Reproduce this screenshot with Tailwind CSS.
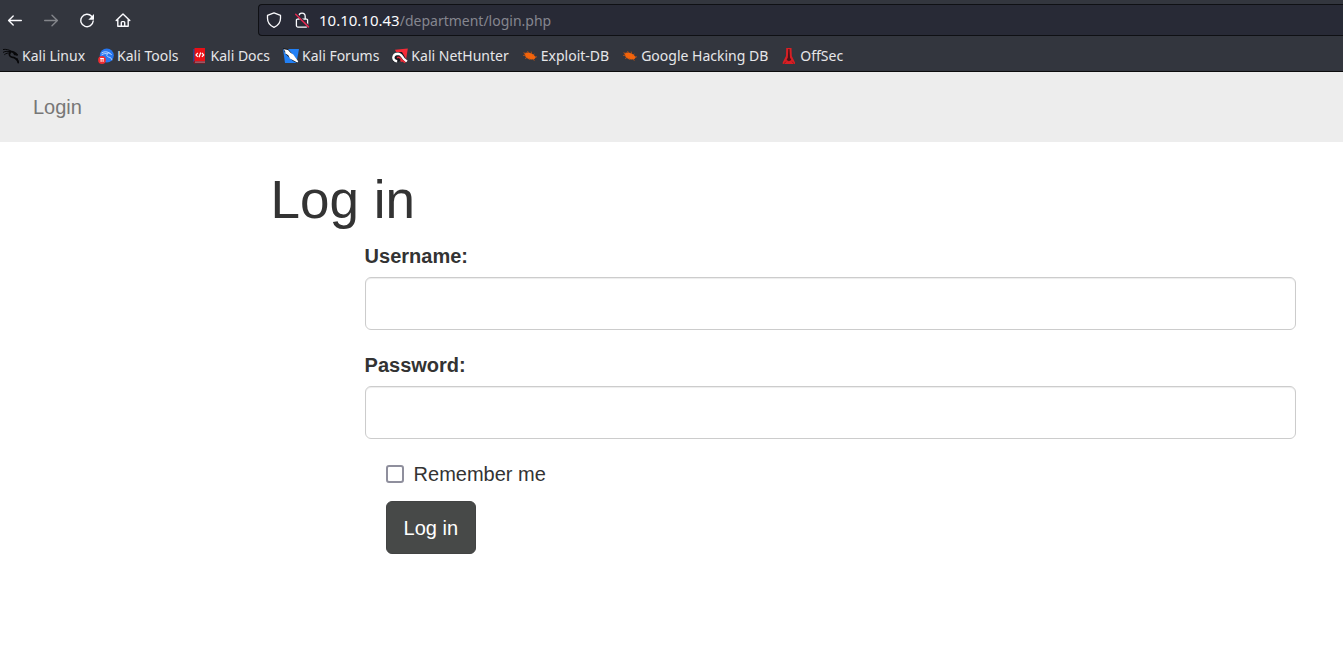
<!DOCTYPE html>
<html lang="en">
<head>
<meta charset="utf-8">
<meta name="viewport" content="width=device-width, initial-scale=1">
<title>Log in</title>
<script src="https://cdn.jsdelivr.net/npm/@tailwindcss/browser@4"></script>
</head>
<body class="min-h-screen bg-white font-['Liberation_Sans',Arial,sans-serif] text-xl/7 text-[#333333]">

<header class="border-b border-[#0c0c0d] bg-[#33363e] pt-1 font-['Noto_Sans',sans-serif] text-[#fbfbfe]">
  <div class="flex items-center">
    <div class="flex w-[258px] shrink-0 gap-5 pl-[7px]">
      <button type="button" aria-label="Back" class="size-4">
        <svg class="size-4" viewBox="0 0 16 16" fill="none" stroke="currentColor" stroke-width="1.4" stroke-linecap="round" stroke-linejoin="round"><path d="M14.3 8.5H1.7M6.200 4 1.600 8.500 6.200 13"/></svg>
      </button>
      <button type="button" aria-label="Forward" disabled class="size-4 text-[#84868b]">
        <svg class="size-4" viewBox="0 0 16 16" fill="none" stroke="currentColor" stroke-width="1.4" stroke-linecap="round" stroke-linejoin="round"><path d="M1.7 8.5h12.6M9 3.2l5.4 5.3L9 13.8"/></svg>
      </button>
      <button type="button" aria-label="Reload" class="size-4">
        <svg class="size-4" viewBox="0 0 16 16" fill="none"><path d="M12.6 4.3A6.2 6.2 0 1 0 14.2 9" stroke="currentColor" stroke-width="1.4" stroke-linecap="round"/><path d="M15 2v5.2a.6.6 0 0 1-.6.6H9.3z" fill="currentColor"/></svg>
      </button>
      <button type="button" aria-label="Home" class="size-4">
        <svg class="size-4" viewBox="0 0 16 16" fill="none" stroke="currentColor" stroke-width="1.4" stroke-linecap="round" stroke-linejoin="round"><path d="M1.2 8.6 8 1.9l6.8 6.7M2.8 7.4v6.900h10.400V7.400M6.300 14v-3.600a.8.8 0 0 1 .8-.8h1.800a.8.8 0 0 1 .8.8V14"/></svg>
      </button>
    </div>
    <div class="flex h-8 grow items-center rounded-l-[4px] border border-r-0 border-[#0f1014] bg-[#282a36] pl-[7px]">
      <svg class="size-4" viewBox="0 0 16 16" fill="none" stroke="currentColor" stroke-width="1.3" stroke-linejoin="round"><path d="M8 .9 14.500 3.400v2.900c0 4.200-2.400 7.300-6.500 9-4.100-1.700-6.500-4.800-6.500-9V3.400z"/></svg>
      <svg class="ml-3 size-4" viewBox="0 0 16 16" fill="none"><path d="M4.800 7V4.400a3.200 3.200 0 0 1 6.400 0V7M3.300 7.200h9.400a.9.900 0 0 1 .9.900v5.500a1.500 1.500 0 0 1-1.500 1.500H3.900a1.500 1.500 0 0 1-1.500-1.500V8.100a.9.900 0 0 1 .9-.9z" stroke="currentColor" stroke-width="1.3"/><path d="M1.200 1.200 15 15" stroke="#282a36" stroke-width="2.600"/><path d="M1.700 2.200 14.500 14.900" stroke="#e22850" stroke-width="1.500" stroke-linecap="round"/></svg>
      <div class="ml-[9px] text-[15px]/6">10.10.10.43<span class="text-sm/6 text-[#85868f]">/department/login.php</span></div>
    </div>
  </div>

  <nav aria-label="Bookmarks" class="flex h-[35px] items-center gap-[13px] pt-px pb-px pl-[3px] text-sm/5 whitespace-nowrap text-[#e6e6e9]">
    <a href="#" class="flex items-center gap-[3px] pt-1">
      <svg class="size-4" viewBox="0 0 16 16" fill="none" stroke="#08080a" stroke-linecap="round"><path d="M0 1.500c3-.6 6.500.2 9 2.200M.2 4.300c2.500-1.400 5-1.300 7.500-.3M1.600 6.500c1.500-1.300 3.400-1.700 5.400-1.600" stroke-width="1"/><path d="M7 3.600c3.600-.6 5.200.7 6.900 3.100M7.400 4.300C5.700 6 6.200 8.500 9 9.100c3.500.6 5.500 1.600 6.200 5.600" stroke-width="1.700"/><path d="M10.300 4.900l4.500 2-3.200-.1zM14 10.500l1.200 3" stroke-width="1.100"/></svg>
      Kali Linux</a>
    <a href="#" class="flex items-center gap-[3px] pt-1">
      <svg class="size-4" viewBox="0 0 16 16" fill="none"><circle cx="8.800" cy="7.500" r="7" fill="#2677f2"/><path d="M3.500 5c3-1.900 6-1.300 8.200.1M3.500 7c2-1.600 4.200-1.700 6-1M9 5.300c2.500-.8 3.900.4 4.600 1.700M9.400 6.100c-1.500 1.700.2 2.800 1.700 3.100 1.800.4 2.500 1.400 2.900 3" stroke="#b9d5ff" stroke-width="1"/><circle cx="4" cy="12" r="3.900" fill="#ef2d32"/><path d="M2.200 10.500h3.600M3.100 10.500v3.400M5.100 10.500v3.400" stroke="#fff" stroke-width="1"/></svg>
      Kali Tools</a>
    <a href="#" class="flex items-center gap-[3px] pt-1">
      <svg class="size-4" viewBox="0 0 16 16" fill="none"><path d="M1 1h2v13H1z" fill="#28418b"/><path d="M2.500 0H13v13H2.500z" fill="#e91016"/><path d="M1.600 13H13v2.500H1.600z" fill="#8f1522"/><path d="M3 13.600h10v1H3z" fill="#a9858f"/><path d="M5.800 5 4 6.900l1.800 1.900M9.900 5l1.800 1.900-1.800 1.900M8.700 4.500 7 9.300" stroke="#fff" stroke-width="1.200"/></svg>
      Kali Docs</a>
    <a href="#" class="flex items-center gap-[3px] pt-1">
      <svg class="size-4" viewBox="0 0 16 16" fill="none"><path d="M0 1h16l-2.500 14H2z" fill="#2280f5"/><path d="M0 0l5 1 10.500 12.500L14 15l-4-2-7.500-7z" fill="#16181e"/><path d="M.8 1.300l4.200.7 2.500 2.800 2.800 1.800L15.300 13.400l-1 1.200-4.600-2.700-2.800-1.400-1.600-3.300-3.700-2.200 1-.7z" fill="#fff"/></svg>
      Kali Forums</a>
    <a href="#" class="flex items-center gap-[3px] pt-1">
      <svg class="size-4" viewBox="0 0 16 16" fill="none"><path d="M3 1.800 15.800.5 14 12 9 14z" fill="#f52b37"/><path d="M0 7.500 4 4l6 0 5.500 9.500-1.500 1.500-5-3.200-3 2.400-5-.5z" fill="#17191f"/><path d="M5.200 13.200c-5.500-.4-5-7.300.8-7.500 3.300 0 3.700 2.900 5.800 5.100l3 2.800" stroke="#fff" stroke-width="2.400"/><path d="M5 9.800c2-1.300 3.200-.2 4.300 1.600l3.800 3.200" stroke="#e92a37" stroke-width="1.700"/></svg>
      Kali NetHunter</a>
    <a href="#" class="flex items-center gap-[3px] pt-1">
      <svg class="size-4" viewBox="0 0 16 16"><path d="M2.300 5.300C4.800 3.600 9.300 4.700 12 7.200l1.800 2-1.300 1.900c-3.200 1-7.200.1-9-2.300z" fill="#f2640c"/><path d="M1.500 4.700l2.500 1M5.300 3l1.900 2M9.200 3.600 9.500 6M12.500 5.900l-1.900 1.200M15 8.800l-2 .2M1 7.400l3 0M3 10.600l2.500-1.400M7.200 11.900l.5-1.800M12.300 12.700l-1.200-2" stroke="#c9540f" stroke-width=".8"/></svg>
      Exploit-DB</a>
    <a href="#" class="flex items-center gap-[3px] pt-1">
      <svg class="size-4" viewBox="0 0 16 16"><path d="M2.300 5.300C4.800 3.600 9.300 4.700 12 7.200l1.800 2-1.300 1.900c-3.200 1-7.200.1-9-2.300z" fill="#f2640c"/><path d="M1.500 4.700l2.500 1M5.300 3l1.900 2M9.200 3.600 9.500 6M12.500 5.900l-1.900 1.200M15 8.800l-2 .2M1 7.400l3 0M3 10.600l2.500-1.400M7.200 11.900l.5-1.800M12.300 12.700l-1.200-2" stroke="#c9540f" stroke-width=".8"/></svg>
      Google Hacking DB</a>
    <a href="#" class="flex items-center gap-[3px] pt-1">
      <svg class="size-4" viewBox="0 0 16 16"><path d="M5.200 0h5.300l.3 8 3.200 6.500V16H1.700v-1.500L5 8z" fill="#d81f24"/><path d="M7.300 1h1.200l.5 8.500 1.300 2.500-2.400 1.300L5.600 12l1.200-2.500z" fill="#4a1519"/><path d="M5 13.500 3 15.800M11 13.500l2 2.300" stroke="#8d171d" stroke-width="1"/></svg>
      OffSec</a>
  </nav>
</header>

<nav aria-label="Main" class="flex h-[70px] items-center bg-[#ededed] px-[33px]">
  <a href="#" class="text-[#777777]">Login</a>
</nav>

<main class="pt-7 pr-[47px] pl-[20%]">
  <h1 class="mb-3 pl-0.5 text-[53px]/[60px]">Log in</h1>
  <form class="pl-24">
    <div class="mb-[21px]">
      <label for="username" class="mb-[7px] block font-bold">Username:</label>
      <input id="username" type="text" class="block h-[53px] w-full rounded-md border border-[#cccccc] bg-white px-4 shadow-[inset_0_1px_1px_rgba(0,0,0,0.075)]">
    </div>
    <div class="mb-[21px]">
      <label for="password" class="mb-[7px] block font-bold">Password:</label>
      <input id="password" type="password" class="block h-[53px] w-full rounded-md border border-[#cccccc] bg-white px-4 shadow-[inset_0_1px_1px_rgba(0,0,0,0.075)]">
    </div>
    <div class="flex flex-col items-start gap-[13px] pl-[21px]">
      <label class="flex items-center gap-[10px]">
        <input type="checkbox" class="size-[18px] appearance-none rounded-[3px] border-2 border-[#8f8f9d] bg-white checked:bg-[#0060df]">
        Remember me
      </label>
      <button type="submit" class="h-[53px] rounded-md border border-[#424343] bg-[#474948] px-[17px] text-white">Log in</button>
    </div>
  </form>
</main>

</body>
</html>
